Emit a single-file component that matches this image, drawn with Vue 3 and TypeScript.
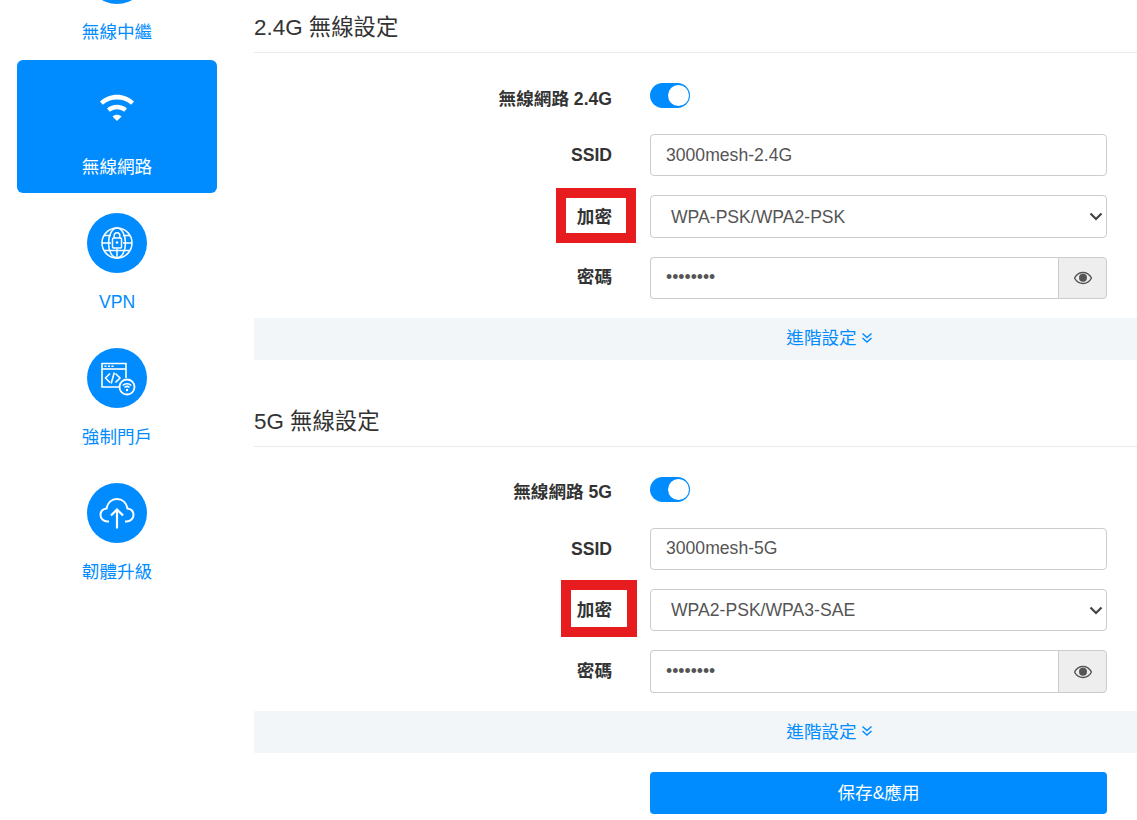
<script setup lang="ts">
interface Section {
  title: string
  toggle: string
  ssid: string
  enc: string
  opts: string[]
}
const sections: Section[] = [
  { title: '2.4G 無線設定', toggle: '無線網路 2.4G', ssid: '3000mesh-2.4G', enc: 'WPA-PSK/WPA2-PSK', opts: ['WPA-PSK/WPA2-PSK', 'WPA2-PSK'] },
  { title: '5G 無線設定', toggle: '無線網路 5G', ssid: '3000mesh-5G', enc: 'WPA2-PSK/WPA3-SAE', opts: ['WPA2-PSK/WPA3-SAE', 'WPA2-PSK'] },
]
</script>

<template>
  <div class="page">
    <aside class="side">
      <div class="item first">
        <span class="circle"></span>
        <span class="name">無線中繼</span>
      </div>
      <div class="item active">
        <svg class="wifi" width="36" height="36" viewBox="0 0 36 36">
          <path d="M1 11.5C10.5 2.500 25.500 2.500 35 11.500L32.200 14.800C24.500 7.800 11.500 7.800 3.800 14.800Z" fill="#fff" />
          <path d="M8 18.500C13.500 13.500 22.500 13.500 28 18.500L25.200 21.800C21 18.300 15 18.300 10.800 21.800Z" fill="#fff" />
          <path d="M18 31L13.500 26.500C16 24.300 20 24.300 22.500 26.500Z" fill="#fff" />
        </svg>
        <span class="name">無線網路</span>
      </div>
      <div class="item">
        <span class="circle">
          <svg width="32" height="32" viewBox="0 0 32 32" fill="none" stroke="#fff" stroke-width="1.500">
            <circle cx="16" cy="16" r="15" />
            <ellipse cx="16" cy="16" rx="8.500" ry="15" />
            <path d="M1 16H10M22 16H31M3 8.500H10M22 8.500H29M3 23.500H29M16 22V31" />
            <rect x="11.500" y="11" width="9" height="10" rx="1" fill="#008cff" />
            <path d="M13.200 11V8.500A2.800 2.800 0 0 1 18.800 8.500V11" />
            <circle cx="16" cy="15.500" r="1.300" fill="#fff" stroke="none" />
          </svg>
        </span>
        <span class="name">VPN</span>
      </div>
      <div class="item">
        <span class="circle">
          <svg width="40" height="40" viewBox="0 0 40 40" fill="none" stroke="#fff" stroke-width="1.600">
            <path d="M24 29H5V5.500H29V20" />
            <path d="M5 11H29" />
            <path d="M7.500 8.300H9.500M11 8.300H13M14.500 8.300H16.500" stroke-width="1.500" />
            <path d="M13 15.500L8.500 20L13 24.500M18.500 15.500L23 20L18.500 24.500M17.300 14.500L14.200 25.500" />
            <circle cx="30" cy="29" r="7.500" fill="#008cff" stroke-width="1.800" />
            <path d="M25.800 27.500C28 25.200 32 25.200 34.200 27.500M27.500 29.500C29 28.200 31 28.200 32.500 29.500" />
            <circle cx="30" cy="32" r="1.200" fill="#fff" stroke="none" />
          </svg>
        </span>
        <span class="name">強制門戶</span>
      </div>
      <div class="item">
        <span class="circle">
          <svg width="36" height="36" viewBox="0 0 36 36" fill="none" stroke="#fff" stroke-width="2">
            <path d="M10 26.500H8.500C4.500 26.500 1.500 23.500 1.500 20C1.500 16.500 4 14 7.500 13.500C8.500 8 12.500 4 18 4C23.500 4 27.500 8 28.500 13.500C32 14 34.500 16.500 34.500 20C34.500 23.500 31.500 26.500 27.500 26.500H26" />
            <path d="M18 33.500V14.500M12 20.500L18 14.500L24 20.500" stroke-width="2.200" />
          </svg>
        </span>
        <span class="name">韌體升級</span>
      </div>
    </aside>

    <main class="main">
      <section v-for="(s, i) in sections" :key="s.title" class="sec">
        <h2 class="title">{{ s.title }}</h2>
        <div class="form">
          <div class="row toggle-row">
            <label class="lab">{{ s.toggle }}</label>
            <span class="switch"><span class="knob"></span></span>
          </div>
          <div class="row">
            <label class="lab">SSID</label>
            <input class="ctl" type="text" :value="s.ssid" />
          </div>
          <div class="row">
            <label class="lab">加密</label>
            <select class="ctl sel">
              <option v-for="o in s.opts" :key="o" :selected="o === s.enc">{{ o }}</option>
            </select>
            <svg class="chev" width="14" height="9" viewBox="0 0 14 9" fill="none" stroke="#444" stroke-width="2.200">
              <path d="M1.500 1.500L7 7L12.500 1.500" />
            </svg>
            <span class="mark" :class="i === 0 ? 'mark-a' : 'mark-b'"></span>
          </div>
          <div class="row pw-row">
            <label class="lab">密碼</label>
            <div class="group">
              <input class="ctl pw" type="password" value="12345678" />
              <span class="eye">
                <svg width="18" height="14" viewBox="0 0 18 14">
                  <path d="M9 1.500C5 1.500 2 4.200 .5 7C2 9.800 5 12.500 9 12.500C13 12.500 16 9.800 17.500 7C16 4.200 13 1.500 9 1.500Z" fill="none" stroke="#555" stroke-width="1.400" />
                  <circle cx="9" cy="6.800" r="4" fill="#555" />
                </svg>
              </span>
            </div>
          </div>
        </div>
        <div class="adv">
          進階設定
          <svg width="12" height="12" viewBox="0 0 12 12" fill="none" stroke="#008cff" stroke-width="1.500">
            <path d="M1.500 1.500L6 5.500L10.500 1.500M1.500 6L6 10L10.500 6" />
          </svg>
        </div>
      </section>
      <div class="actions">
        <button class="save" type="button">保存&amp;應用</button>
      </div>
    </main>
  </div>
</template>

<style>
html, body { margin: 0; background: #fff; overflow: hidden; }
</style>

<style scoped>
.page {
  display: flex;
  height: 820px;
  overflow: hidden;
  font-family: "Liberation Sans", "Noto Sans CJK TC", sans-serif;
  font-size: 17.6px;
  color: #333;
}
.side {
  width: 200px;
  margin-left: 17px;
  flex: none;
  display: flex;
  flex-direction: column;
  align-items: center;
}
.item {
  width: 200px;
  display: flex;
  flex-direction: column;
  align-items: center;
  color: #008cff;
  height: 135px;
}
.item.first { height: 60px; }
.item.first .circle { margin-top: -56px; flex: none; }
.item.first .name { margin-top: 17px; }
.active {
  height: 133px;
  background: #008cff;
  color: #fff;
  border-radius: 6px;
  margin-bottom: 20px;
}
.wifi { margin-top: 30px; }
.active .name { margin-top: 30px; }
.circle {
  width: 60px;
  height: 60px;
  border-radius: 50%;
  background: #008cff;
  display: flex;
  align-items: center;
  justify-content: center;
}
.name { margin-top: 18px; line-height: 22px; font-size: 17.6px; }
.main {
  flex: 1;
  margin-left: 37px;
  min-width: 0;
}
.sec { margin-bottom: 33.8px; }
.sec:nth-of-type(2) { margin-bottom: 18.6px; }
.title {
  margin: 0;
  height: 53px;
  padding-top: 13px;
  box-sizing: border-box;
  font-size: 22.4px;
  font-weight: 400;
  line-height: 30px;
  border-bottom: 1px solid #eaeaea;
  color: #333;
}
.form { padding-top: 30px; }
.row {
  display: flex;
  align-items: center;
  position: relative;
  margin-bottom: 19px;
  height: 42.4px;
}
.pw-row { margin-bottom: 18.6px; }
.toggle-row { height: 25px; margin-bottom: 26px; }
.lab {
  width: 358px;
  text-align: right;
  font-weight: 700;
  color: #333;
  font-size: 17.6px;
  line-height: 24px;
  flex: none;
}
.pw-row .lab { position: relative; top: -1px; }
.toggle-row .lab { position: relative; top: 3px; }
.switch {
  margin-left: 38px;
  width: 40px;
  height: 25px;
  border-radius: 13px;
  background: #008cff;
  position: relative;
  display: block;
}
.knob {
  position: absolute;
  top: 2px;
  right: 1.500px;
  width: 21px;
  height: 21px;
  border-radius: 50%;
  background: #fff;
}
.ctl {
  margin-left: 38px;
  width: 457px;
  height: 100%;
  box-sizing: border-box;
  border: 1px solid #ccc;
  border-radius: 4px;
  background: #fff;
  color: #555;
  font: 17.6px "Liberation Sans", "Noto Sans CJK TC", sans-serif;
  padding: 0 15px;
  outline: none;
}
.sel {
  appearance: none;
  padding: 0 30px 0 20px;
}
.chev {
  position: absolute;
  left: 835px;
  top: 17px;
  pointer-events: none;
}
.group { margin-left: 38px; width: 457px; height: 100%; display: flex; }
.pw {
  margin-left: 0;
  flex: 1;
  min-width: 0;
  width: auto;
  border-radius: 4px 0 0 4px;
  border-right: 0;
}
.eye {
  width: 49px;
  flex: none;
  box-sizing: border-box;
  border: 1px solid #ccc;
  border-radius: 0 4px 4px 0;
  background: #eee;
  display: flex;
  align-items: center;
  justify-content: center;
}
.mark {
  position: absolute;
  border: 10px solid #e71c1f;
  box-sizing: border-box;
  pointer-events: none;
}
.mark-a { left: 302px; top: -7.4px; width: 80px; height: 55px; }
.mark-b { left: 307px; top: -9px; width: 76px; height: 57px; }
.adv {
  height: 42px;
  box-sizing: border-box;
  background: #f3f6f9;
  color: #008cff;
  display: flex;
  align-items: center;
  justify-content: center;
  gap: 4px;
  padding-left: 268px;
  padding-bottom: 4px;
  font-size: 17.6px;
}
.adv svg { position: relative; top: 1px; }
.actions { padding-left: 396px; }
.save {
  display: block;
  width: 457px;
  height: 42px;
  border: 0;
  border-radius: 4px;
  background: #008cff;
  color: #fff;
  padding: 0 0 2px;
  font: 17.6px "Liberation Sans", "Noto Sans CJK TC", sans-serif;
}
</style>
